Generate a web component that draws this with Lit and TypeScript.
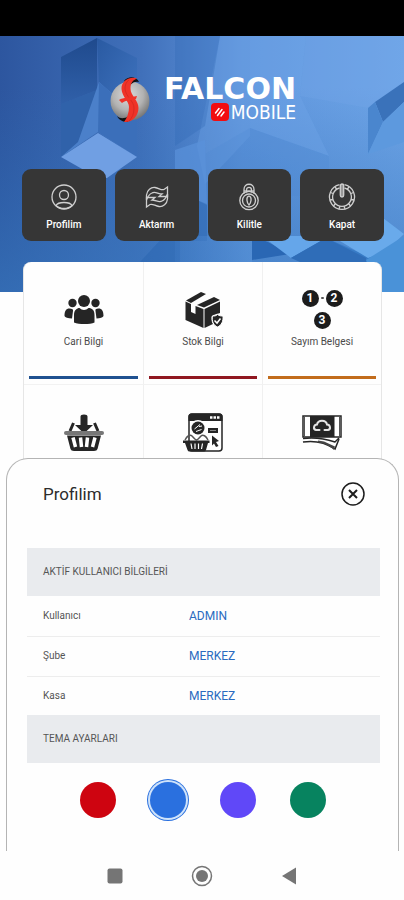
import { LitElement, html, css, svg } from "lit";
import { customElement, state } from "lit/decorators.js";

const backdrop = html`<svg class="backdrop" viewBox="0 0 404 256" preserveAspectRatio="none" aria-hidden="true">
  <defs>
    <linearGradient id="sky" x1="0" y1="0" x2="1" y2="0">
      <stop offset="0" stop-color="#2d569f" />
      <stop offset="0.35" stop-color="#4070ba" />
      <stop offset="0.6" stop-color="#6096dd" />
      <stop offset="1" stop-color="#6fa6e8" />
    </linearGradient>
    <linearGradient id="low" x1="0" y1="0" x2="0" y2="1">
      <stop offset="0.2" stop-color="#2f6cb5" stop-opacity="0" />
      <stop offset="1" stop-color="#3777be" stop-opacity="0.65" />
    </linearGradient>
    <linearGradient id="faceA" x1="0" y1="0" x2="0" y2="1">
      <stop offset="0" stop-color="#1f4a8d" />
      <stop offset="1" stop-color="#3060a9" />
    </linearGradient>
    <linearGradient id="faceB" x1="0" y1="0" x2="1" y2="1">
      <stop offset="0" stop-color="#2a5aa2" />
      <stop offset="1" stop-color="#3f74c0" />
    </linearGradient>
    <linearGradient id="faceC" x1="0" y1="0" x2="1" y2="0">
      <stop offset="0" stop-color="#3d78c2" />
      <stop offset="1" stop-color="#5c96dc" />
    </linearGradient>
  </defs>
  <rect width="404" height="256" fill="url(#sky)" />
  <rect width="404" height="256" fill="url(#low)" />
  <polygon points="220,0 250,0 250,100 205,148 197,110" fill="#6b9fe4" opacity="0.4" />
  <polygon points="175,0 220,0 205,90 175,110" fill="#2f68b4" opacity="0.3" />
  <polygon points="250,0 306,0 300,60 329,120 250,92" fill="#74a8ea" opacity="0.3" />
  <polygon points="250,92 329,120 329,160 205,160 205,118" fill="#4c88d2" opacity="0.2" />
  <polygon points="306,0 404,0 404,46 368,72 300,60" fill="#74a6e8" opacity="0.3" />
  <polygon points="61,21 97,2 97,54 61,68" fill="url(#faceA)" />
  <polygon points="61,68 97,54 76,116 61,121" fill="#3062aa" />
  <polygon points="97,2 137,22 137,80 99,46" fill="url(#faceB)" />
  <polygon points="99,46 137,80 137,121 98,96 61,121 78,106" fill="#4b80ca" />
  <polygon points="99,46 137,80 137,121 98,96" fill="#3b6fba" />
  <polygon points="61,121 98,97 137,121 107,142 98,142" fill="#709fe3" />
  <polygon points="404,46 375,66 383,86 404,66" fill="#3a72ba" />
  <polygon points="375,66 368,72 368,118 383,86" fill="#4a86ce" />
  <polygon points="383,86 404,66 404,106 368,118" fill="#5d99de" />
  <polygon points="175,114 205,104 207,168 197,164 175,150" fill="#5a92da" opacity="0.7" />
  <polygon points="197,164 207,169 207,205 180,205 180,240 140,226" fill="#2763b0" opacity="0.45" />
  <polygon points="175,200 252,200 252,226 175,226" fill="url(#faceC)" opacity="0.5" />
  <polygon points="252,200 268,206 290,218 252,224" fill="#2a67b4" />
  <polygon points="262,200 330,200 291,222" fill="#65a6ea" />
  <polygon points="291,222 326,202 404,236 404,256 382,256 382,226 340,226" fill="#377bc6" />
  <polygon points="291,222 326,202 366,222 366,226 300,226" fill="#2f6db8" />
  <polygon points="383,182 404,198 385,216 368,222 340,205" fill="#69aaeb" />
  <polygon points="366,224 404,200 404,256 382,256" fill="#4a92d8" />
</svg>`;

const emblem = html`<svg class="emblem" viewBox="0 0 40 48" aria-hidden="true">
  <defs>
    <radialGradient id="ball" cx="0.45" cy="0.35" r="0.65">
      <stop offset="0" stop-color="#dcdcdc" />
      <stop offset="0.6" stop-color="#b2b2b2" />
      <stop offset="1" stop-color="#757575" />
    </radialGradient>
  </defs>
  <circle cx="20" cy="25" r="19.5" fill="url(#ball)" />
  <path d="M14 5C18 0 26 0 29 6C26 5 23 6 20 9Z" fill="#111" />
  <path d="M7 40C10 43 14 43 19 40L18 46C13 46 9 44 7 40Z" fill="#111" />
  <path d="M27 2.500C20 0 11 5 11.500 13C12 21 19 25 19 31C19 37 17 42 14 46C22 47 28.500 40 28.500 32C28.500 24 20.500 20 20.500 12.500C20.500 7 23 4 27 2.500Z" fill="#ef3328" />
  <path d="M15 13C16 21 24 25 24 32C24 38 22 42 19 45M19 4C16 6 15 9 15 13" fill="none" stroke="#d92a20" stroke-width="1" />
  <path d="M9 24C13 21 20 22 27 20L26 23C21 24 16 24 12 27Z" fill="#ef3328" />
</svg>`;

const badge = html`<svg class="badge" viewBox="0 0 18 18" aria-hidden="true">
  <rect width="18" height="18" rx="4" fill="#f20d10" />
  <path d="M4.500 10L8 5.500M6.500 12.500L11 6.500M10 13L13 9" stroke="#fff" stroke-width="1.500" stroke-linecap="round" />
</svg>`;

const lineIcons = {
  profile: svg`<circle cx="14" cy="14" r="12" /><circle cx="14" cy="12" r="4.500" /><path d="M6 22.500C8 18.500 20 18.500 22 22.500C18 26.500 10 26.500 6 22.500Z" />`,
  sync: svg`<path d="M3.500 17V12C4 7 8 4 12 4.500C16 5 18 7.500 21 6.500L24.500 4V13.500H16L19 11C15 11 12 8 9 10C6 11 5 13 3.500 17Z" /><path d="M24.500 11V16C24 21 20 24 16 23.500C12 23 10 20.500 7 21.500L3.500 24V14.500H12L9 17C13 17 16 20 19 18C22 17 23 15 24.500 11Z" />`,
  lock: svg`<path d="M9 10.500V6.500C9 -.500 19 -.500 19 6.500V10.500" /><path d="M11.500 9.500V7C11.500 3.500 16.500 3.500 16.500 7V9.500" /><path d="M9 8H19" /><circle cx="14" cy="17.500" r="9.200" /><circle cx="14" cy="17.500" r="6.500" /><path d="M14 13C10.500 14 12 20 14 22C16 20 17.500 14 14 13Z" />`,
  power: svg`<path d="M11.500 1.700A12.500 12.500 0 1 0 16.500 1.700" /><path d="M11.500 5A9.400 9.400 0 1 0 16.500 5" /><path d="M7 4L9 6.500M21 4L19 6.500M2.500 9.500L5 10.500M25.500 9.500L23 10.500M2 17L5 16.500M26 17L23 16.500M5.500 23L7.500 20.500M22.500 23L20.500 20.500M11 26L12 23M17 26L16 23" /><rect x="12.300" y="1" width="3.400" height="13" rx="1.700" fill="#999" />`,
};

const tileIcons = {
  people: svg`<circle cx="20" cy="12" r="6" /><circle cx="8.500" cy="14" r="4.200" /><circle cx="31.500" cy="14" r="4.200" />
    <path d="M10 33.500V26C10 21 13 19 15.500 19C18 21.500 22 21.500 24.500 19C28 19 30.500 21 30.500 26V33.500C26 35.500 15 35.500 10 33.500Z" />
    <path d="M5.500 19.500C8 20 9.500 20 9 22L8 29.500C4 29.500 1 28.500 .500 27C.500 22 2 19.500 5.500 19.500Z" />
    <path d="M34.500 19.500C32 20 31 20 31.500 22L32.500 29.500C36 29.500 39 28.500 39.500 27C39.500 22 38 19.500 34.500 19.500Z" />`,
  box: svg`<path d="M3 11.500L18 3L23 5L8 14Z" /><path d="M14 16L31 8L37 11L21 18.500Z" />
    <path d="M2.500 12.500L8 15V23L12.500 25V17L20.500 20V39L2.500 31Z" />
    <path d="M21.500 20L37 12.500V24C33 25 29 26 28.500 28C28.500 32 29 34 30 35L21.500 39Z" />
    <path d="M34.500 25.500C36.500 27 38 27 40 27C40.500 32 38.500 36.500 34.500 38C30.500 36.500 28.500 32 29.500 27C31.500 27 33 27 34.500 25.500Z" stroke="#fff" />
    <path d="M31.500 31.500L34 34L37.500 29.500" fill="none" stroke="#fff" stroke-width="1.500" />`,
  basket: svg`<path d="M16.500 4.500Q16.500 2.500 20 2.500Q23.500 2.500 23.500 4.500V13H29L20 21.500L11 13H16.500Z" />
    <path d="M9.500 11L6 19M30.500 11L34 19" stroke="#252525" stroke-width="3" />
    <rect y="19" width="40" height="4" rx="2" fill="#777" />
    <path d="M3 23.500H37L33.500 37Q33 39 30 39H10Q7 39 6.500 37Z" />
    <path d="M9 25.500L11.500 35M16.500 25.500L17.500 35M23.500 25.500L22.500 35M31 25.500L28.500 35" stroke="#fff" stroke-width="3.500" />`,
  shop: svg`<rect x="6" y="2" width="33" height="37" rx="3" fill="#fff" stroke="#252525" stroke-width="1.500" />
    <path d="M5.500 9V4.500Q5.500 1.500 8.500 1.500H36.500Q39.500 1.500 39.500 4.500V9Z" /><path d="M27 5.500H37" stroke="#fff" stroke-width="2.500" stroke-dasharray="2.500 1" />
    <circle cx="15" cy="16" r="8" fill="#fff" /><circle cx="15" cy="16" r="6.500" /><path d="M11.500 17L17 12.500M13 19.500L18.500 17.500M16 14.500L19 14" stroke="#fff" stroke-width="1" />
    <rect x="25" y="16" width="10" height="5" /><path d="M27 18.500H33" stroke="#888" />
    <path d="M29 23.500L36 29L33 30L35.500 34L33 35L31 31.500L29 33.500Z" />
    <path d="M2 29H25V38H3Z" fill="#fff" />
    <path d="M2 28C4 24 7 22 9 24C11 26 12 28 13.500 28C15 28 16 26 18 24C20 22 23 24 25 28" fill="none" stroke="#555" stroke-width="1.500" />
    <path d="M0 28.500H26.500V31H25L23 38Q22.500 39.500 21 39.500H6.500Q5 39.500 4.500 38L2 31H0Z" />
    <path d="M8 31.500L9 37M12 31.500V37M15.500 31.500V37M19.500 31.500L18.500 37" stroke="#fff" stroke-width="1.200" />`,
  cash: svg`<rect x="1" y="4" width="38" height="21" fill="#fff" stroke="#252525" stroke-width="1.500" />
    <rect x="8" y="4" width="24.500" height="21" /><path d="M2.500 4V25M37.500 4V25" stroke="#555" />
    <path d="M17.500 18H14C10.500 17 12 12.500 15 12.500C16 7.500 24 7.500 25 12.500C28 12.500 29.500 17 26 18H22.500" fill="none" stroke="#e4e4e4" stroke-width="2" stroke-linecap="round" />
    <path d="M1 26.500C12 25 24 27 33 30L37 26" fill="none" stroke="#252525" stroke-width="1.500" />
    <path d="M1 30C14 28 24 31 33 37L37 27" fill="none" stroke="#252525" stroke-width="1.500" />
    <path d="M16 28.500L22 29.500L33 34.500L32 38C28 34 22 31 16 30.500Z" fill="#444" />`,
};

const steps = html`<span class="steps"><b>1</b><i></i><b>2</b><b class="third">3</b></span>`;

@customElement("app-root")
export class AppRoot extends LitElement {
  @state() private theme = "blue";
  @state() private open = true;

  static styles = css`
    :host {
      display: flex;
      flex-direction: column;
      min-height: 100vh;
      background: #fefefe;
      font-family: Roboto, "Open Sans", sans-serif;
      color: #333;
    }
    * { box-sizing: border-box; }
    button { font: inherit; color: inherit; border: 0; margin: 0; padding: 0; background: none; cursor: pointer; }
    h1, h2, h3 { margin: 0; font-weight: 400; }
    .status { height: 36px; background: #000; }
    main { position: relative; flex: 1; }
    .hero { position: relative; height: 256px; padding: 40px 20px 0 22px; }
    .backdrop { position: absolute; inset: 0; width: 100%; height: 100%; }
    .logo { position: relative; display: flex; justify-content: center; gap: 6px; height: 48px; color: #fff; }
    .emblem { width: 40px; height: 48px; }
    .words { display: flex; flex-direction: column; align-items: flex-end; gap: 1px; min-width: 140px; }
    .falcon { font: 700 30px/25px "DejaVu Sans", sans-serif; }
    .mobile { display: flex; align-items: center; gap: 2px; font: 400 19px/20px "DejaVu Sans Condensed", Roboto, sans-serif; }
    .badge { width: 18px; height: 18px; }
    .actions { position: relative; display: grid; grid-template-columns: repeat(4, 1fr); gap: 9px; margin-top: 45px; }
    .action {
      display: flex; flex-direction: column; align-items: center; gap: 8px;
      height: 72px; padding-top: 14px; border-radius: 9px;
      background: #363636; color: #fff; font-size: 10px; line-height: 12px; font-weight: 500;
    }
    .action svg { width: 28px; height: 28px; fill: none; stroke: #cfcfcf; stroke-width: 1.3; }
    .tiles {
      position: relative; display: grid; grid-template-columns: repeat(3, 1fr);
      margin: -30px 22px 0 23px; background: #fefefe; border: 1px solid #e6e6e6; border-top: 0;
      border-radius: 8px;
    }
    .tile {
      display: flex; flex-direction: column; align-items: center; height: 123px; padding: 27px 5px 5px;
      border-bottom: 1px solid #f2f2f2; font-size: 10px; line-height: 12px; color: #4a4a4a;
    }
    .tile + .tile { border-left: 1px solid #f0f0f0; }
    .tile:nth-child(4) { border-left: 0; }
    .tile svg { width: 40px; height: 40px; fill: #252525; margin-bottom: 7px; }
    .bar { width: 100%; height: 3px; margin-top: auto; }
    .bar.navy { background: #1f5190; }
    .bar.crimson { background: #901720; }
    .bar.orange { background: #c26c1c; }
    .steps {
      display: grid; grid-template-columns: 17px 3px 17px; column-gap: 2px; row-gap: 4px; align-items: center;
      height: 40px; margin-bottom: 7px;
    }
    .steps b {
      height: 17px; border-radius: 50%; background: #1c1c1c; color: #fff;
      font-size: 12px; line-height: 17px; text-align: center;
    }
    .steps i { height: 2px; background: #555; border-radius: 1px; }
    .steps .third { grid-column: 1 / -1; justify-self: center; width: 17px; }
    .sheet {
      position: absolute; left: 6px; right: 5px; bottom: 0;
      padding: 0 18px 0 20px; background: #fefefe;
      border: 1px solid #b4b4b4; border-bottom: 0; border-radius: 22px 22px 0 0;
    }
    .head { display: flex; align-items: center; justify-content: space-between; height: 70px; margin-bottom: 19px; padding: 0 15px 0 16px; }
    .head h2 { font-size: 17px; line-height: 20px; color: #2c2c2c; }
    .close, .close svg { display: block; width: 24px; height: 24px; }
    .section { display: flex; align-items: center; height: 48px; padding: 0 16px; background: #e9ebee; font-size: 10px; line-height: 12px; color: #555; }
    table { width: 100%; border-collapse: collapse; }
    th, td { height: 40px; padding: 0 0 0 16px; border-bottom: 1px solid #ededed; text-align: left; font-weight: 400; line-height: 14px; }
    tr:last-child > * { border-bottom: 0; height: 39px; }
    th { width: 146px; font-size: 10px; color: #555; }
    td { font-size: 12px; color: #2a6bbf; }
    fieldset { display: flex; justify-content: center; margin: 0; padding: 16px 2px 30px 0; border: 0; }
    fieldset label { display: flex; align-items: center; justify-content: center; width: 70px; height: 42px; }
    fieldset input { appearance: none; margin: 0; width: 36px; height: 36px; border-radius: 50%; background: currentColor; cursor: pointer; }
    fieldset input:checked { box-shadow: 0 0 0 2px #cfe3fa, 0 0 0 3px currentColor; }
    .red { color: #ce0410; }
    .blue { color: #2a70df; }
    .violet { color: #6048f8; }
    .green { color: #07835f; }
    nav { display: flex; justify-content: center; height: 49px; }
    nav button { display: flex; align-items: center; justify-content: center; width: 87px; }
    nav svg { width: 22px; height: 22px; fill: #757575; }
  `;

  private action(icon: unknown, label: string, run?: () => void) {
    return html`<button class="action" @click=${run}>
      <svg viewBox="0 0 28 28" aria-hidden="true">${icon}</svg><span>${label}</span>
    </button>`;
  }

  private tile(icon: unknown, label: string, bar: string) {
    return html`<button class="tile">
      <svg viewBox="0 0 40 40" aria-hidden="true">${icon}</svg><span>${label}</span><span class="bar ${bar}"></span>
    </button>`;
  }

  private iconTile(icon: unknown, label: string) {
    return html`<button class="tile" aria-label=${label}><svg viewBox="0 0 40 40" aria-hidden="true">${icon}</svg></button>`;
  }

  private renderSheet() {
    const rows = [["Kullanıcı", "ADMIN"], ["Şube", "MERKEZ"], ["Kasa", "MERKEZ"]];
    const themes = [["red", "Kırmızı"], ["blue", "Mavi"], ["violet", "Mor"], ["green", "Yeşil"]];
    return html`<section class="sheet" role="dialog" aria-labelledby="title">
      <div class="head">
        <h2 id="title">Profilim</h2>
        <button class="close" aria-label="Kapat" @click=${() => (this.open = false)}>
          <svg viewBox="0 0 24 24" fill="none" stroke="#1c1c1c" aria-hidden="true">
            <circle cx="12" cy="12" r="11" stroke-width="1.500" />
            <path d="M8 8L16 16M16 8L8 16" stroke-width="2" />
          </svg>
        </button>
      </div>
      <h3 class="section">AKTİF KULLANICI BİLGİLERİ</h3>
      <table>
        <tbody>${rows.map(([k, v]) => html`<tr><th scope="row">${k}</th><td>${v}</td></tr>`)}</tbody>
      </table>
      <h3 class="section" id="themes">TEMA AYARLARI</h3>
      <fieldset aria-labelledby="themes">
        ${themes.map(([id, name]) => html`<label>
          <input type="radio" name="theme" class=${id} aria-label=${name} .checked=${this.theme === id}
            @change=${() => (this.theme = id)} />
        </label>`)}
      </fieldset>
    </section>`;
  }

  render() {
    return html`
      <div class="status"></div>
      <main>
        <header class="hero">
          ${backdrop}
          <h1 class="logo">
            ${emblem}
            <span class="words">
              <span class="falcon">FALCON</span>
              <span class="mobile">${badge}MOBILE</span>
            </span>
          </h1>
          <div class="actions">
            ${this.action(lineIcons.profile, "Profilim", () => (this.open = true))}
            ${this.action(lineIcons.sync, "Aktarım")}
            ${this.action(lineIcons.lock, "Kilitle")}
            ${this.action(lineIcons.power, "Kapat")}
          </div>
        </header>
        <div class="tiles">
          ${this.tile(tileIcons.people, "Cari Bilgi", "navy")}
          ${this.tile(tileIcons.box, "Stok Bilgi", "crimson")}
          <button class="tile">${steps}<span>Sayım Belgesi</span><span class="bar orange"></span></button>
          ${this.iconTile(tileIcons.basket, "Sepet")}
          ${this.iconTile(tileIcons.shop, "Sipariş")}
          ${this.iconTile(tileIcons.cash, "Tahsilat")}
        </div>
        ${this.open ? this.renderSheet() : null}
      </main>
      <nav aria-label="Sistem">
        <button aria-label="Son uygulamalar"><svg viewBox="0 0 22 22"><rect x="3.500" y="3.500" width="15" height="15" rx="2" /></svg></button>
        <button aria-label="Ana ekran"><svg viewBox="0 0 22 22"><circle cx="11" cy="11" r="9.500" fill="none" stroke="#757575" stroke-width="1.500" /><circle cx="11" cy="11" r="6" /></svg></button>
        <button aria-label="Geri"><svg viewBox="0 0 22 22"><path d="M4 11L18 2.500V19.500Z" /></svg></button>
      </nav>
    `;
  }
}
